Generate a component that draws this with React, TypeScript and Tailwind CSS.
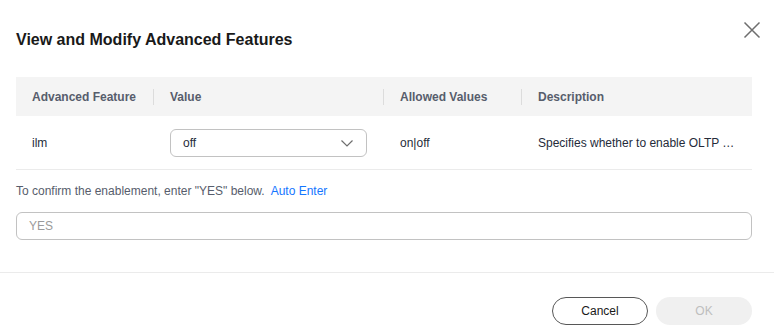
const font = { fontFamily: '"Liberation Sans", Arial, sans-serif' };

export default function App() {
  return (
    <div
      className="relative w-[774px] h-[334px] bg-white text-[#252b3a]"
      style={font}
    >
      <button className="absolute top-[21px] right-[13px] text-[#6e6e6e]">
        <svg width="18" height="18" viewBox="0 0 18 18" fill="none" stroke="currentColor" strokeWidth="1.5">
          <path d="M1.5 1.5 L16.5 16.5 M16.5 1.5 L1.5 16.5" />
        </svg>
      </button>

      <div className="pl-4 pr-[22px] pt-[28px]">
        <h2 className="text-base font-bold leading-6 text-[#191919]">
          View and Modify Advanced Features
        </h2>

        <div className="mt-[25px]">
          <div className="grid grid-cols-[138px_230px_138px_1fr] h-[39px] bg-[#f4f4f4] items-center text-xs font-bold text-[#575d6c]">
            <div className="pl-4 border-r border-[#dcdcdc] h-4 flex items-center">Advanced Feature</div>
            <div className="pl-4 border-r border-[#dcdcdc] h-4 flex items-center">Value</div>
            <div className="pl-4 border-r border-[#dcdcdc] h-4 flex items-center">Allowed Values</div>
            <div className="pl-4 h-4 flex items-center">Description</div>
          </div>
          <div className="grid grid-cols-[138px_230px_138px_1fr] items-center text-xs border-b border-[#ebebeb] pt-[13px] pb-3">
            <div className="pl-4">ilm</div>
            <div className="pl-4 pr-4">
              <div className="h-7 w-[197px] flex items-center justify-between rounded-md border border-[#c2c2c2] pl-3 pr-[13px]">
                <span>off</span>
                <svg width="12" height="7" viewBox="0 0 12 7" fill="none" stroke="#6e6e6e" strokeWidth="1.2">
                  <path d="M0.5 0.5 L6 6 L11.5 0.5" />
                </svg>
              </div>
            </div>
            <div className="pl-4">on|off</div>
            <div className="pl-4 truncate">Specifies whether to enable OLTP …</div>
          </div>
        </div>

        <p className="mt-[11px] text-xs leading-5 text-[#575d6c]">
          To confirm the enablement, enter "YES" below.
          <span className="ml-[6px] text-[#1476ff]">Auto Enter</span>
        </p>

        <div className="mt-[11px] h-7 rounded-md border border-[#c2c2c2] flex items-center pl-3 text-xs text-[#9a9a9a]">
          YES
        </div>
      </div>

      <div className="mt-8 border-t border-[#ebebeb] pt-6 pr-[22px] flex justify-end gap-2">
        <button className="w-24 h-7 rounded-full border border-[#575757] text-xs text-[#191919]">
          Cancel
        </button>
        <button className="w-24 h-7 rounded-full bg-[#f0f0f0] text-xs text-[#bebebe]">
          OK
        </button>
      </div>
    </div>
  );
}
